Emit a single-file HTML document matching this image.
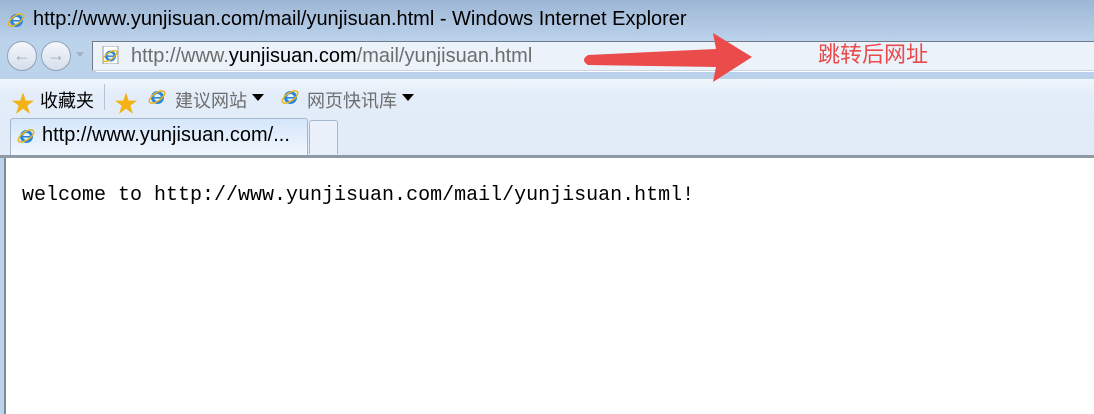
<!DOCTYPE html>
<html><head><meta charset="utf-8"><style>
body{margin:0;width:1094px;height:414px;overflow:hidden;position:relative;font-family:"Liberation Sans","Noto Sans CJK SC",sans-serif;background:#fff}
.a{position:absolute}
.ie{position:absolute;width:18px;height:18px}
</style></head><body>
<div class="a" style="left:0;top:0;width:1094px;height:42px;background:linear-gradient(#9db6d4,#bcd3ec)"></div>
<svg class="ie" style="left:7px;top:11px" viewBox="0 0 18 18"><circle cx="9.5" cy="9.5" r="6.5" fill="#2a86d8"/><circle cx="9.5" cy="9.5" r="3.5" fill="#e8f2fb"/><rect x="6" y="9" width="9" height="1.6" fill="#2a86d8"/><ellipse cx="9" cy="9" rx="9" ry="4" fill="none" stroke="#e6b521" stroke-width="1.5" transform="rotate(-35 9 9)"/></svg>
<div class="a" style="left:33px;top:8px;font-size:20px;color:#000">http://www.yunjisuan.com/mail/yunjisuan.html - Windows Internet Explorer</div>
<div class="a" style="left:0;top:42px;width:96px;height:30px;background:#bcd3ec"></div>
<div class="a" style="left:7px;top:41px;width:30px;height:30px;border-radius:50%;border:1px solid #8ea2b8;background:linear-gradient(#f4f7fb,#d5dfea);box-sizing:border-box;color:#a0aab6;text-align:center;font-size:18px;line-height:27px">←</div>
<div class="a" style="left:41px;top:41px;width:30px;height:30px;border-radius:50%;border:1px solid #8ea2b8;background:linear-gradient(#f4f7fb,#d5dfea);box-sizing:border-box;color:#a0aab6;text-align:center;font-size:18px;line-height:27px">→</div>
<div class="a" style="left:76px;top:52px;border-left:4px solid transparent;border-right:4px solid transparent;border-top:5px solid #a4b0bd"></div>
<div class="a" style="left:92px;top:41px;width:1002px;height:30px;background:#ebf2fa;border-top:1px solid #707c8a;border-left:1px solid #707c8a;border-bottom:1px solid #c8d4e2;box-sizing:border-box"></div>
<svg class="ie" style="left:101px;top:46px" viewBox="0 0 18 18"><rect x="2" y="0" width="15" height="18" fill="#fff" stroke="#999"/><circle cx="9.5" cy="10" r="5.5" fill="#2a86d8"/><circle cx="9.5" cy="10" r="3" fill="#e8f2fb"/><rect x="6" y="9.5" width="8" height="1.4" fill="#2a86d8"/><ellipse cx="9" cy="10" rx="8" ry="3.5" fill="none" stroke="#e6b521" stroke-width="1.3" transform="rotate(-35 9 10)"/></svg>
<div class="a" style="left:131px;top:45px;font-size:20px;color:#6d6d6d">http://www.<span style="color:#000">yunjisuan.com</span>/mail/yunjisuan.html</div>
<div class="a" style="left:818px;top:37px;font-size:22px;color:#e94b4b">跳转后网址</div>
<div class="a" style="left:0;top:72px;width:1094px;height:7px;background:#b9d1ea"></div>
<div class="a" style="left:0;top:79px;width:1094px;height:76px;background:linear-gradient(#f1f6fc,#e3edf9 20%,#e1ecf8)"></div>
<svg class="a" style="left:0;top:0" width="1094" height="100"><path d="M588 55 L716 49 L713 33 L752 57 L713 82 L716 67 L588 65 Q580 60 588 55Z" fill="#ea4b4b"/></svg>
<div class="a" style="left:11px;top:84px;font-size:24px;color:#f3b216">★</div>
<div class="a" style="left:40px;top:87px;font-size:18px;color:#000">收藏夹</div>
<div class="a" style="left:104px;top:84px;width:1px;height:26px;background:#b5c3d3"></div>
<div class="a" style="left:114px;top:84px;font-size:24px;color:#f3b216">★</div>
<svg class="ie" style="left:148px;top:88px" viewBox="0 0 18 18"><circle cx="9.5" cy="9.5" r="6.5" fill="#2a86d8"/><circle cx="9.5" cy="9.5" r="3.5" fill="#e8f2fb"/><rect x="6" y="9" width="9" height="1.6" fill="#2a86d8"/><ellipse cx="9" cy="9" rx="9" ry="4" fill="none" stroke="#e6b521" stroke-width="1.5" transform="rotate(-35 9 9)"/></svg>
<div class="a" style="left:175px;top:87px;font-size:18px;color:#6d6d6d">建议网站</div>
<div class="a" style="left:252px;top:94px;border-left:6px solid transparent;border-right:6px solid transparent;border-top:7px solid #000"></div>
<svg class="ie" style="left:281px;top:88px" viewBox="0 0 18 18"><circle cx="9.5" cy="9.5" r="6.5" fill="#2a86d8"/><circle cx="9.5" cy="9.5" r="3.5" fill="#e8f2fb"/><rect x="6" y="9" width="9" height="1.6" fill="#2a86d8"/><ellipse cx="9" cy="9" rx="9" ry="4" fill="none" stroke="#e6b521" stroke-width="1.5" transform="rotate(-35 9 9)"/></svg>
<div class="a" style="left:307px;top:87px;font-size:18px;color:#6d6d6d">网页快讯库</div>
<div class="a" style="left:402px;top:94px;border-left:6px solid transparent;border-right:6px solid transparent;border-top:7px solid #000"></div>
<div class="a" style="left:10px;top:118px;width:298px;height:38px;background:linear-gradient(#d4e6fb,#f2f7fd);border:1px solid #a5b7cc;border-bottom:none;border-radius:3px 3px 0 0;box-sizing:border-box"></div>
<svg class="ie" style="left:17px;top:127px" viewBox="0 0 18 18"><circle cx="9.5" cy="9.5" r="6.5" fill="#2a86d8"/><circle cx="9.5" cy="9.5" r="3.5" fill="#e8f2fb"/><rect x="6" y="9" width="9" height="1.6" fill="#2a86d8"/><ellipse cx="9" cy="9" rx="9" ry="4" fill="none" stroke="#e6b521" stroke-width="1.5" transform="rotate(-35 9 9)"/></svg>
<div class="a" style="left:42px;top:124px;font-size:20px;color:#000">http://www.yunjisuan.com/...</div>
<div class="a" style="left:309px;top:120px;width:29px;height:34px;background:#eaf1fa;border:1px solid #a5b7cc;border-bottom:none;border-radius:3px 3px 0 0;box-sizing:border-box"></div>
<div class="a" style="left:0;top:155px;width:1094px;height:3px;background:#8e9aa6"></div>
<div class="a" style="left:0;top:158px;width:4px;height:256px;background:#bcd3ec"></div>
<div class="a" style="left:4px;top:158px;width:2px;height:256px;background:#808a94"></div>
<div class="a" style="left:22px;top:184px;font-family:'Liberation Mono',monospace;font-size:20px;color:#000;white-space:pre">welcome to http://www.yunjisuan.com/mail/yunjisuan.html!</div>
</body></html>
